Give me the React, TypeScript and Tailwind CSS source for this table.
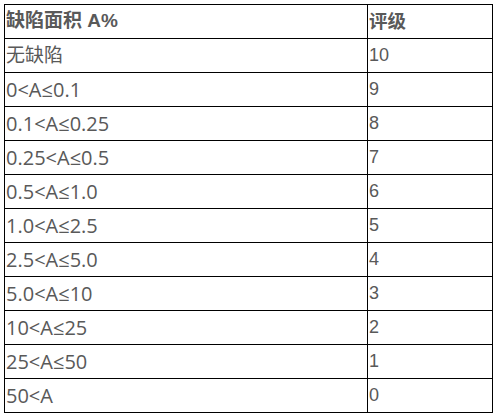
const rows: [string, string][] = [
  ["无缺陷", "10"],
  ["0<A≤0.1", "9"],
  ["0.1<A≤0.25", "8"],
  ["0.25<A≤0.5", "7"],
  ["0.5<A≤1.0", "6"],
  ["1.0<A≤2.5", "5"],
  ["2.5<A≤5.0", "4"],
  ["5.0<A≤10", "3"],
  ["10<A≤25", "2"],
  ["25<A≤50", "1"],
  ["50<A", "0"],
];

export default function App() {
  return (
    <div className="w-[499px] h-[417px] bg-white pt-[4px] pl-[4px]">
      <table className="border-collapse w-[489px] text-[#595959] text-[18px]">
        <thead>
          <tr className="h-[34px]">
            <th className="w-[363px] border border-black text-left font-bold pl-[1px] text-[19px] font-['Liberation_Sans','Noto_Sans_CJK_SC',sans-serif]">
              缺陷面积 A%
            </th>
            <th className="border border-black text-left font-bold pl-[1px] text-[18.5px] font-['Liberation_Sans','Noto_Sans_CJK_SC',sans-serif]">
              评级
            </th>
          </tr>
        </thead>
        <tbody>
          {rows.map(([area, grade], i) => (
            <tr key={area} className="h-[34px]">
              <td
                className={`border border-black pl-[1px] font-['Open_Sans','Noto_Sans_CJK_SC',sans-serif] ${
                  i === 0 ? "text-[19px]" : "text-[20px]"
                }`}
              >
                {area}
              </td>
              <td className="border border-black pl-[1px] font-['Liberation_Sans','Noto_Sans_CJK_SC',sans-serif]">
                {grade}
              </td>
            </tr>
          ))}
        </tbody>
      </table>
    </div>
  );
}
